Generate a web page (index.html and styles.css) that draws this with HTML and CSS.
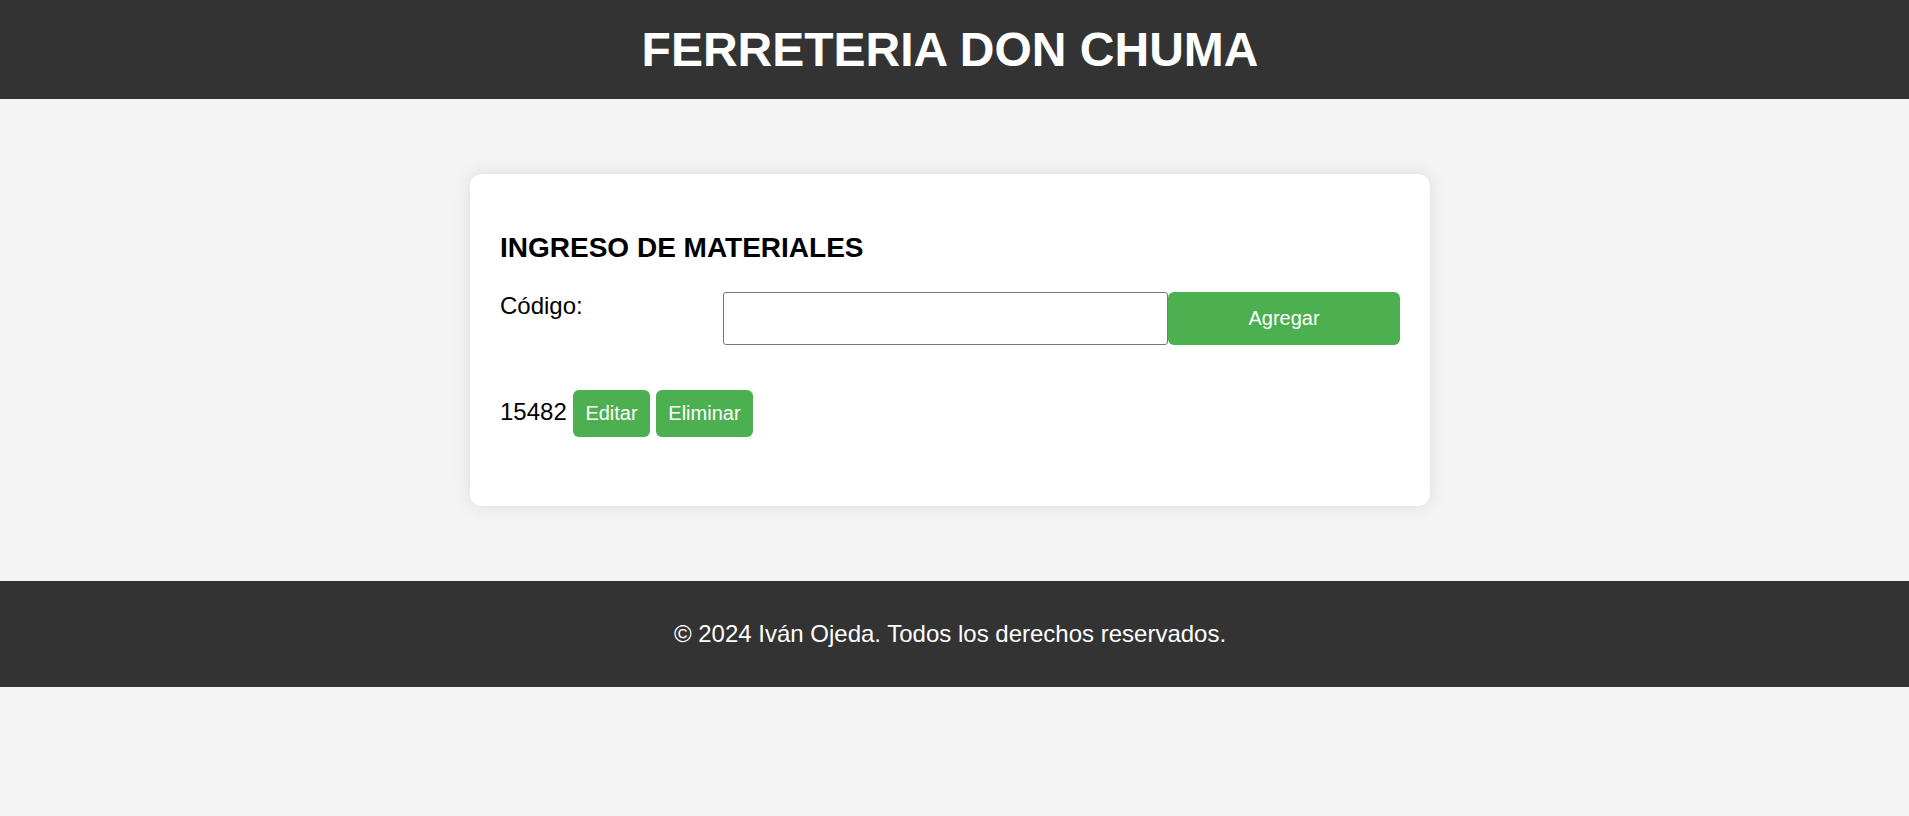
FILE: index.html
```html
<!DOCTYPE html>
<html lang="es">
<head>
<meta charset="utf-8">
<title>Ferreteria Don Chuma</title>
<link rel="stylesheet" href="styles.css">
</head>
<body>
<header class="site-header">
  <h1 class="site-title">FERRETERIA DON CHUMA</h1>
</header>
<main class="content">
  <section class="card">
    <h2 class="card-title">INGRESO DE MATERIALES</h2>
    <form class="entry-form">
      <label for="codigo">Código:</label>
      <input class="code-input" type="text" id="codigo">
      <button class="button" type="submit">Agregar</button>
    </form>
    <ul class="materials">
      <li>
        15482
        <button class="button" type="button">Editar</button>
        <button class="button" type="button">Eliminar</button>
      </li>
    </ul>
  </section>
</main>
<footer class="site-footer">
  <p class="copyright">© 2024 Iván Ojeda. Todos los derechos reservados.</p>
</footer>
</body>
</html>
```
FILE: styles.css
```css
* {
  box-sizing: border-box;
}

body {
  margin: 0;
  background: #f4f4f4;
  color: #000;
  font-family: "Liberation Sans", Arial, sans-serif;
  font-size: 24px;
  line-height: 28px;
}

.site-header,
.site-footer {
  background: #333;
  color: #fff;
  text-align: center;
}

.site-header {
  padding: 22px 9px 21px 0;
}

.site-title {
  margin: 0;
  font-size: 48px;
  line-height: 56px;
}

.content {
  padding: 75px 9px 75px 0;
}

.card {
  max-width: 960px;
  margin: 0 auto;
  padding: 30px;
  border-radius: 12px;
  background: #fff;
  box-shadow: 0 0 18px rgba(0, 0, 0, 0.1);
}

.card-title {
  margin: 28px 0;
  font-size: 28px;
  line-height: 32px;
}

.entry-form {
  display: grid;
  grid-template-columns: 223fr 445fr 232fr;
}

.code-input {
  min-width: 0;
  height: 53px;
  padding: 12px;
  border: 1px solid #767676;
  border-radius: 3px;
  background: #fff;
  font: inherit;
}

.button {
  padding: 12px;
  border: 0;
  border-radius: 6px;
  background: #4caf50;
  color: #fff;
  font-family: inherit;
  font-size: 20px;
  line-height: 23px;
}

.materials {
  margin: 45px 0 39px;
  padding: 0;
  list-style: none;
}

.site-footer {
  padding: 39px 9px 39px 0;
}

.copyright {
  margin: 0;
}
```
